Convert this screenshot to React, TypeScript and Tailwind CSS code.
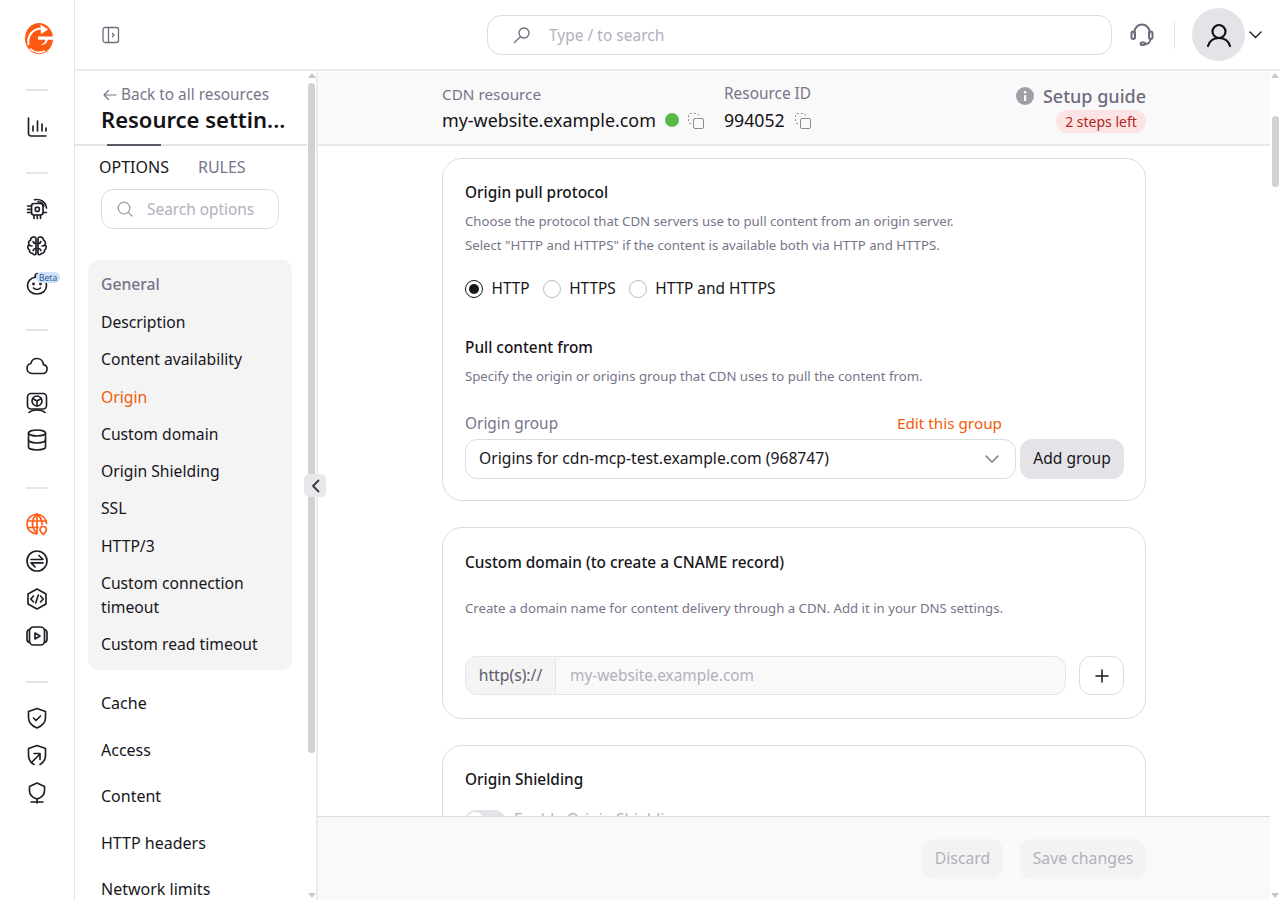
import React from "react";

type IP = { className?: string; children?: React.ReactNode; size?: number; sw?: number };
const I = ({ className = "text-[#1f1d24]", children, size = 24, sw = 1.65 }: IP) => (
  <svg width={size} height={size} viewBox="0 0 24 24" fill="none" stroke="currentColor" strokeWidth={sw} strokeLinecap="round" strokeLinejoin="round" className={`shrink-0 ${className}`}>
    {children}
  </svg>
);

const Logo = () => (
  <svg width="30" height="33" viewBox="0 0 30 33" className="shrink-0">
    <ellipse cx="15" cy="16.500" rx="14" ry="15.500" fill="#ff5a14" />
    <path fill="none" stroke="#fff" strokeWidth="2" d="M4.500 23C3 13 9 6.500 18 6.500" />
    <path fill="#fff" d="M16.500 2.500l7.500 5-7 4.500z" />
    <path fill="#fff" d="M14 14.500h16v3.200h-6c-1 3.500-4 5.500-7.500 5.300 3-1 4.500-3 5-5.300H14z" />
    <path fill="none" stroke="#fff" strokeWidth="1.600" d="M6 26.500c4 4 10 4.500 15 2.500" />
  </svg>
);

const Chart = () => <I><path d="M3.500 3v15.500a2.500 2.500 0 0 0 2.500 2.500h15" /><path d="M8 16v-5M12.500 16V6M17 16v-7M21 16v-3" /></I>;
const Chip = () => <I><rect x="6.500" y="6.500" width="11.500" height="11.500" rx="2.500" /><rect x="10.300" y="10.300" width="4" height="4" rx="1" /><path d="M2.500 9h4M2.500 12.300h4M2.500 15.500h4M9 18v3.500M12.300 18v3.500M15.500 18v3.500M18 15.500h3.500" /><path d="M9.500 2.800C15 1.500 20.800 4.500 21.500 11M13 4.800c2.800.2 5 1.800 5.800 4.500" /></I>;
const Brain = () => <I><path d="M11 4.500C10.500 3 8.800 2.500 7.500 3.200 6.300 3.600 5.500 4.800 5.700 6 3.800 6.800 3 9 4 10.800c-1.800 1.400-1.600 4.200.4 5.200-.2 2 1.300 3.600 3.200 3.300.8 1.700 3 2 3.400.4zM13 4.500c.5-1.500 2.200-2 3.500-1.300 1.200.4 2 1.600 1.800 2.800 1.900.8 2.700 3 1.700 4.800 1.800 1.400 1.600 4.200-.4 5.200.2 2-1.300 3.600-3.200 3.300-.8 1.700-3 2-3.400.4z" /><path d="M11 9.500c-1.300 0-2.500-.7-2.800-2M13 9.500c1.300 0 2.500-.7 2.800-2M11 14.500c-1.300 0-2.500.7-2.800 2M13 14.500c1.300 0 2.500.7 2.800 2M4 10.800c.8.800 2 1.200 3 1.200M20 10.800c-.8.800-2 1.200-3 1.200" /></I>;
const Baby = () => (
  <div className="relative h-6 w-6">
    <I><path d="M10.500 5.200c-5 .6-8 4.300-8 8.300 0 5 4 8.500 9.500 8.500s9.500-3.500 9.500-8.500c0-3-2-6-4.500-7.300" /><path d="M10.500 5.200C9.500 4 10 2 12.500 1.500" /><path d="M8.500 16c2 2 5 2 7 0" /><circle cx="8.500" cy="12" r=".6" /><circle cx="15.500" cy="12" r=".6" /></I>
    <span className="absolute left-[11px] top-0 rounded-full bg-[#cfe2f8] px-[3px] text-[8.500px] leading-[11px] text-[#2a5a9a]">Beta</span>
  </div>
);
const Cloud = () => <I><path d="M7 19.500h10.500a4.500 4.500 0 0 0 1-8.900C18 7 15.300 4.500 12 4.500c-3 0-5.500 2-6.200 5C3.500 10 2 12 2 14.300c0 3 2.200 5.200 5 5.200z" /></I>;
const Gpu = () => <I><rect x="2.500" y="2.500" width="19" height="15.500" rx="3.500" /><circle cx="12" cy="10" r="5" /><path d="M12 10V15M12 10l-4.300-2.500M12 10l4.300-2.500" /><path d="M4 21.500c2-1.800 5-2.500 8-2.500s6 .7 8 2.500" /></I>;
const Db = () => <I><ellipse cx="12" cy="5" rx="8.500" ry="3" /><path d="M3.500 5v14c0 1.700 3.800 3 8.500 3s8.500-1.300 8.500-3V5" /><path d="M3.500 12c0 1.700 3.800 3 8.500 3s8.500-1.300 8.500-3" /></I>;
const Globe = () => <I className="text-[#ff5a14]"><path d="M21.500 11.500A9.800 9.800 0 1 0 12 21.800" /><path d="M12 2v19.500M2.500 9h18.500M3 15.500h10M12 2c-6 5-6 14 0 19.500M12 2c3.500 3 5.200 6.500 5 10.500" /><path d="M18.200 22.500c-2-2-3.200-3.400-3.200-4.800a3.200 3.200 0 0 1 6.400 0c0 1.400-1.200 2.800-3.200 4.800z" /></I>;
const Swap = () => <I><circle cx="12" cy="12" r="10" /><path d="M6 10.500h12l-4-4M18 13.800H6l4 4" /></I>;
const Code = () => <I><path d="M12 2l9 5v10l-9 5-9-5V7z" /><path d="M8.500 9L5.800 12l2.700 3M15.500 9l2.700 3-2.700 3M13.300 8l-2.600 8" /></I>;
const Video = () => <I><rect x="4.500" y="3" width="15" height="18" rx="4" /><path d="M4.500 5.500C2.800 6 2 7 2 8.500v7c0 1.500.8 2.500 2.500 3M19.500 5.500C21.200 6 22 7 22 8.500v7c0 1.500-.8 2.500-2.500 3" /><path d="M10 9v6l5-3z" /></I>;
const Shield = () => <I><path d="M12 2.500l8.500 3v6c0 5-3.500 8.500-8.500 10.500-5-2-8.500-5.500-8.500-10.500v-6z" /><path d="M8.500 12l2.500 2.500 4.500-4.500" /></I>;
const ShieldArrow = () => <I><path d="M9 21.500C5.500 19.500 3.500 16 3.500 12V5.500l8.500-3 8.500 3V12c0 4-2 7.500-5.500 9.500" /><path d="M6.500 19.500L15 11M9 10.500h6v6" /></I>;
const Pin = () => <I><path d="M12 2l7.500 3.500V10c0 4-3 6.500-7.500 8-4.500-1.500-7.500-4-7.500-8V5.500z" /><path d="M12 18v4M6 21h12" /></I>;

const Divider = () => <div className="h-[2px] w-[22px] shrink-0 bg-[#e6e5e8]" />;

const Rail = () => (
  <aside className="flex h-full w-[75px] shrink-0 flex-col items-center border-r border-[#e4e4e6] bg-white pt-[22px]">
    <div className="ml-[4px]"><Logo /></div>
    <div className="mt-[34px]"><Divider /></div>
    <div className="mt-[24px]"><Chart /></div>
    <div className="mt-[33px]"><Divider /></div>
    <div className="mt-[23px] flex flex-col gap-[13.300px]"><Chip /><Brain /><Baby /></div>
    <div className="mt-[33px]"><Divider /></div>
    <div className="mt-[23px] flex flex-col gap-[13.300px]"><Cloud /><Gpu /><Db /></div>
    <div className="mt-[35px]"><Divider /></div>
    <div className="mt-[23px] flex flex-col gap-[13.300px]"><Globe /><Swap /><Code /><Video /></div>
    <div className="mt-[33px]"><Divider /></div>
    <div className="mt-[23px] flex flex-col gap-[13.300px]"><Shield /><ShieldArrow /><Pin /></div>
  </aside>
);

const TopBar = () => (
  <header className="flex h-[71px] shrink-0 items-center border-b-2 border-[#ececee] bg-white">
    <svg width="18" height="18" viewBox="0 0 18 18" fill="none" stroke="#6f6b7d" strokeWidth="1.300" className="ml-[27px] shrink-0">
      <rect x="1" y="1.500" width="15.500" height="15" rx="2" /><path d="M6.500 1.500v15M10 7l2 2-2 2" />
    </svg>
    <div className="ml-[367px] flex h-10 w-[625px] items-center rounded-[14px] border border-[#dcdbdf] pl-[25px]">
      <svg width="18" height="18" viewBox="0 0 18 18" fill="none" stroke="#6f6b7d" strokeWidth="1.300" strokeLinecap="round" className="shrink-0">
        <circle cx="11" cy="7" r="5" /><path d="M7.300 10.700L1.500 16.500" />
      </svg>
      <span className="ml-[18px] mt-[3px] text-[15.500px] text-[#b3afbd]">Type / to search</span>
    </div>
    <svg width="26" height="26" viewBox="0 0 26 26" fill="none" stroke="#6f6b7d" strokeWidth="2" strokeLinecap="round" className="ml-[17px] shrink-0">
      <path d="M5.500 12V10a7.500 7.500 0 0 1 15 0v2" /><rect x="2.500" y="9.500" width="3.500" height="7.500" rx="1.700" /><rect x="20" y="9.500" width="3.500" height="7.500" rx="1.700" /><path d="M21.500 17c0 3-2.500 5-5.500 5" /><rect x="11.500" y="20.500" width="4.500" height="2.500" rx="1.200" />
    </svg>
    <div className="ml-[19px] h-7 w-px bg-[#e4e3e7]" />
    <div className="ml-[17px] flex h-[53px] w-[53px] items-center justify-center rounded-full bg-[#e4e3e7]">
      <svg width="26" height="26" viewBox="0 0 26 26" fill="none" stroke="#141217" strokeWidth="2.200" strokeLinecap="round">
        <circle cx="13" cy="9.500" r="6.500" /><path d="M2 24c1.500-5 5-8 11-8s9.500 3 11 8" />
      </svg>
    </div>
    <svg width="13" height="8" viewBox="0 0 13 8" fill="none" stroke="#18161b" strokeWidth="1.300" strokeLinecap="round" strokeLinejoin="round" className="ml-[4px]">
      <path d="M1 1l5.500 5.500L12 1" />
    </svg>
  </header>
);

const items = ["Description", "Content availability", "Origin", "Custom domain", "Origin Shielding", "SSL", "HTTP/3"];
const lower = ["Cache", "Access", "Content", "HTTP headers", "Network limits"];

const Arrow = ({ down }: { down?: boolean }) => (
  <div className={`h-0 w-0 border-x-[4px] border-x-transparent ${down ? "border-t-[5px] border-t-[#c8c7cc]" : "border-b-[5px] border-b-[#c8c7cc]"}`} />
);

const Sidebar = () => (
  <aside className="relative flex h-full w-[243px] shrink-0 border-r-2 border-[#ececee] bg-white">
    <div className="h-full w-[232px] overflow-hidden">
      <div className="border-b-2 border-[#e4e4e6] pb-[11px] pl-[26px] pt-[13px]">
        <div className="flex h-[21px] items-center text-[15.400px] leading-[21px] text-[#78748a]">
          <svg width="14" height="12" viewBox="0 0 14 12" fill="none" stroke="#78748a" strokeWidth="1.200" strokeLinecap="round" strokeLinejoin="round" className="ml-[2px] mr-[4px]"><path d="M13 6H1M5.500 1.500L1 6l4.500 4.500" /></svg>
          Back to all resources
        </div>
        <div className="text-[22px] font-semibold leading-[28px] text-[#141217]">Resource settin...</div>
      </div>
      <div className="relative">
        <div className="absolute left-[32px] top-[-2px] h-[2px] w-[54px] bg-[#5a5766]" />
        <div className="flex gap-[29px] pl-[24px] pt-[10px] text-[16px] leading-[22px]">
          <span className="text-[#18161b]">OPTIONS</span>
          <span className="text-[#78748a]">RULES</span>
        </div>
        <div className="ml-[26px] mt-[11px] flex h-10 w-[178px] items-center rounded-[12px] border border-[#dcdbdf] pl-[15px]">
          <svg width="16" height="16" viewBox="0 0 16 16" fill="none" stroke="#a09daa" strokeWidth="1.300" strokeLinecap="round"><circle cx="7" cy="7" r="5.800" /><path d="M11.500 11.500L15 15" /></svg>
          <span className="ml-[14px] mt-[1px] text-[15.400px] text-[#b3afbd]">Search options</span>
        </div>
        <div className="ml-[13px] mt-[31px] w-[204px] rounded-[10px] bg-[#f4f4f5] px-[13px] pb-[14px] pt-[12px] text-[15.700px] leading-[24px] text-[#18161b]">
          <div className="font-medium text-[#78748a]">General</div>
          <div className="mt-[14px] flex flex-col gap-[13.300px]">
            {items.map((t) => (
              <div key={t} className={t === "Origin" ? "text-[#f25a0a]" : ""}>{t}</div>
            ))}
            <div>Custom connection timeout</div>
            <div>Custom read timeout</div>
          </div>
        </div>
        <div className="ml-[26px] mt-[21px] flex flex-col gap-[22.500px] text-[16px] leading-[24px] text-[#18161b]">
          {lower.map((t) => <div key={t}>{t}</div>)}
        </div>
      </div>
    </div>
    <div className="flex h-full w-[9px] flex-col items-center pt-[2px]">
      <Arrow />
      <div className="mt-[5px] h-[670px] w-[7px] rounded-full bg-[#d2d1d6]" />
      <div className="mt-auto pb-[2px]"><Arrow down /></div>
    </div>
    <button className="absolute left-[229px] top-[403px] flex h-[23px] w-[22px] items-center justify-center rounded-[5px] bg-[#e8e7ea]">
      <svg width="9" height="14" viewBox="0 0 9 14" fill="none" stroke="#3a3842" strokeWidth="1.800" strokeLinecap="round" strokeLinejoin="round"><path d="M7.500 1.500L2 7l5.500 5.500" /></svg>
    </button>
  </aside>
);

const Copy = () => (
  <svg width="18" height="18" viewBox="0 0 18 18" fill="none" stroke="#8f8c99" strokeWidth="1" className="shrink-0">
    <rect x="6.500" y="6.500" width="10" height="10" rx="1.500" />
    <path d="M4 11.500H3a1.500 1.500 0 0 1-1.500-1.500V3A1.500 1.500 0 0 1 3 1.500h7A1.500 1.500 0 0 1 11.500 3v1" strokeDasharray="2 2" />
  </svg>
);

const ResourceHeader = () => (
  <div className="flex h-[75px] shrink-0 border-b-2 border-[#e8e8ea] bg-[#f9f9f9] pl-[124px] pt-[11px]">
    <div className="flex w-[704px] justify-between">
      <div className="flex">
        <div className="w-[282px]">
          <div className="text-[15.300px] leading-[24px] text-[#78748a]">CDN resource</div>
          <div className="mt-[1px] flex items-center leading-[26px]">
            <span className="text-[17.900px] text-[#141217]">my-website.example.com</span>
            <span className="ml-[9px] h-[14px] w-[14px] rounded-full bg-[#5cb949]" />
            <span className="ml-[8px] mt-[2px]"><Copy /></span>
          </div>
        </div>
        <div>
          <div className="text-[15.400px] leading-[24px] text-[#78748a]">Resource ID</div>
          <div className="mt-[1px] flex items-center leading-[26px]">
            <span className="text-[17.700px] text-[#141217]">994052</span>
            <span className="ml-[9px] mt-[2px]"><Copy /></span>
          </div>
        </div>
      </div>
      <div className="flex flex-col items-end">
        <div className="flex items-center gap-[9px] text-[18px] font-medium leading-[28px] text-[#6f6b7d]">
          <svg width="18" height="18" viewBox="0 0 18 18"><circle cx="9" cy="9" r="9" fill="#a09ea5" /><rect x="8" y="8" width="2.200" height="6" rx=".5" fill="#fff" /><circle cx="9.100" cy="5.300" r="1.300" fill="#fff" /></svg>
          Setup guide
        </div>
        <div className="flex h-[23px] w-[90px] items-center justify-center rounded-full bg-[#fde3e3] text-[14px] text-[#b3261e]">2 steps left</div>
      </div>
    </div>
  </div>
);

const Radio = ({ label, on }: { label: string; on?: boolean }) => (
  <label className="flex items-center gap-[8.500px] text-[15.400px] text-[#18161b]">
    <span className={`flex h-[18px] w-[18px] items-center justify-center rounded-full border ${on ? "border-[#18161b]" : "border-[#bdbbc3]"} bg-white`}>
      {on && <span className="h-[10px] w-[10px] rounded-full bg-[#18161b]" />}
    </span>
    {label}
  </label>
);

const cardCls = "w-[704px] rounded-[20px] border border-[#dcdbdf] bg-white pl-[22px] pr-[21px]";
const titleCls = "text-[15.400px] font-medium leading-[22px] text-[#18161b]";
const descCls = "text-[13.200px] leading-[24px] text-[#78748a]";

const Cards = () => (
  <div className="flex flex-1 flex-col gap-[26px] overflow-hidden pl-[124px] pt-[12px]">
    <section className={`${cardCls} h-[343px] shrink-0 pt-[23px]`}>
      <h3 className={titleCls}>Origin pull protocol</h3>
      <p className={`${descCls} mt-[5px]`}>Choose the protocol that CDN servers use to pull content from an origin server.<br />Select "HTTP and HTTPS" if the content is available both via HTTP and HTTPS.</p>
      <div className="mt-[20px] flex gap-[13px]">
        <Radio label="HTTP" on /><Radio label="HTTPS" /><Radio label="HTTP and HTTPS" />
      </div>
      <h3 className={`${titleCls} mt-[37px]`}>Pull content from</h3>
      <p className={`${descCls} mt-[5px]`}>Specify the origin or origins group that CDN uses to pull the content from.</p>
      <div className="mt-[23px] flex w-[537px] items-end justify-between">
        <span className="text-[15.400px] leading-[24px] text-[#78748a] translate-y-[1px]">Origin group</span>
        <span className="text-[15.300px] leading-[24px] text-[#f25a0a]">Edit this group</span>
      </div>
      <div className="mt-[4px] flex gap-[4px]">
        <div className="flex h-10 w-[551px] items-center justify-between rounded-[12px] border border-[#dcdbdf] pl-[13px] pr-[16px] text-[15.700px] text-[#18161b]">
          Origins for cdn-mcp-test.example.com (968747)
          <svg width="14" height="8" viewBox="0 0 14 8" fill="none" stroke="#6f6b7d" strokeWidth="1.300" strokeLinecap="round" strokeLinejoin="round"><path d="M1 1l6 6 6-6" /></svg>
        </div>
        <button className="h-10 w-[104px] rounded-[12px] bg-[#e4e3e7] text-[15.600px] text-[#18161b]">Add group</button>
      </div>
    </section>
    <section className={`${cardCls} h-[192px] shrink-0 pt-[24px]`}>
      <h3 className={titleCls}>Custom domain (to create a CNAME record)</h3>
      <p className={`${descCls} mt-[22px]`}>Create a domain name for content delivery through a CDN. Add it in your DNS settings.</p>
      <div className="mt-[36px] flex gap-[13px]">
        <div className="flex h-[39px] w-[601px] items-center rounded-[12px] border border-[#e4e3e7] bg-[#f9f9f9] pt-[1px] text-[15.400px]">
          <span className="flex h-full w-[90px] items-center justify-center rounded-l-[12px] border-r border-[#e4e3e7] bg-[#f4f4f5] text-[15.700px] text-[#5f5b6b]">http(s)://</span>
          <span className="ml-[14px] text-[#b3afbd]">my-website.example.com</span>
        </div>
        <button className="flex h-[39px] w-[45px] items-center justify-center rounded-[12px] border border-[#dcdbdf] bg-white">
          <svg width="14" height="14" viewBox="0 0 14 14" stroke="#18161b" strokeWidth="1.500" strokeLinecap="round"><path d="M7 1v12M1 7h12" /></svg>
        </button>
      </div>
    </section>
    <section className={`${cardCls} h-[300px] shrink-0 pt-[23px]`}>
      <h3 className={titleCls}>Origin Shielding</h3>
      <div className="mt-[17px] flex items-center gap-[9px]">
        <span className="flex h-[20px] w-[40px] items-center rounded-full bg-[#e4e3e7] px-[2px]"><span className="h-4 w-4 rounded-full bg-white" /></span>
        <span className="text-[15.400px] text-[#b3afbd]">Enable Origin Shielding</span>
      </div>
    </section>
  </div>
);

const Footer = () => (
  <footer className="flex h-[84px] shrink-0 items-center justify-end gap-[17px] border-t border-[#dcdbdf] bg-[#f9f9f9] pr-[124px] text-[15.800px] text-[#b3afbd]">
    <button className="h-10 w-[81px] rounded-[12px] bg-[#f3f3f4]">Discard</button>
    <button className="h-10 w-[126px] rounded-[12px] bg-[#f3f3f4]">Save changes</button>
  </footer>
);

export default function App() {
  return (
    <div className="flex h-[900px] w-[1280px] overflow-hidden bg-white font-['Noto_Sans',sans-serif]">
      <Rail />
      <div className="flex min-w-0 flex-1 flex-col">
        <TopBar />
        <div className="flex min-h-0 flex-1">
          <Sidebar />
          <main className="flex min-w-0 flex-1 flex-col">
            <ResourceHeader />
            <Cards />
            <Footer />
          </main>
          <div className="flex h-full w-[10px] shrink-0 flex-col items-center pt-[2px]">
            <Arrow />
            <div className="mt-[38px] h-[71px] w-[7px] rounded-full bg-[#d2d1d6]" />
            <div className="mt-auto pb-[2px]"><Arrow down /></div>
          </div>
        </div>
      </div>
    </div>
  );
}
